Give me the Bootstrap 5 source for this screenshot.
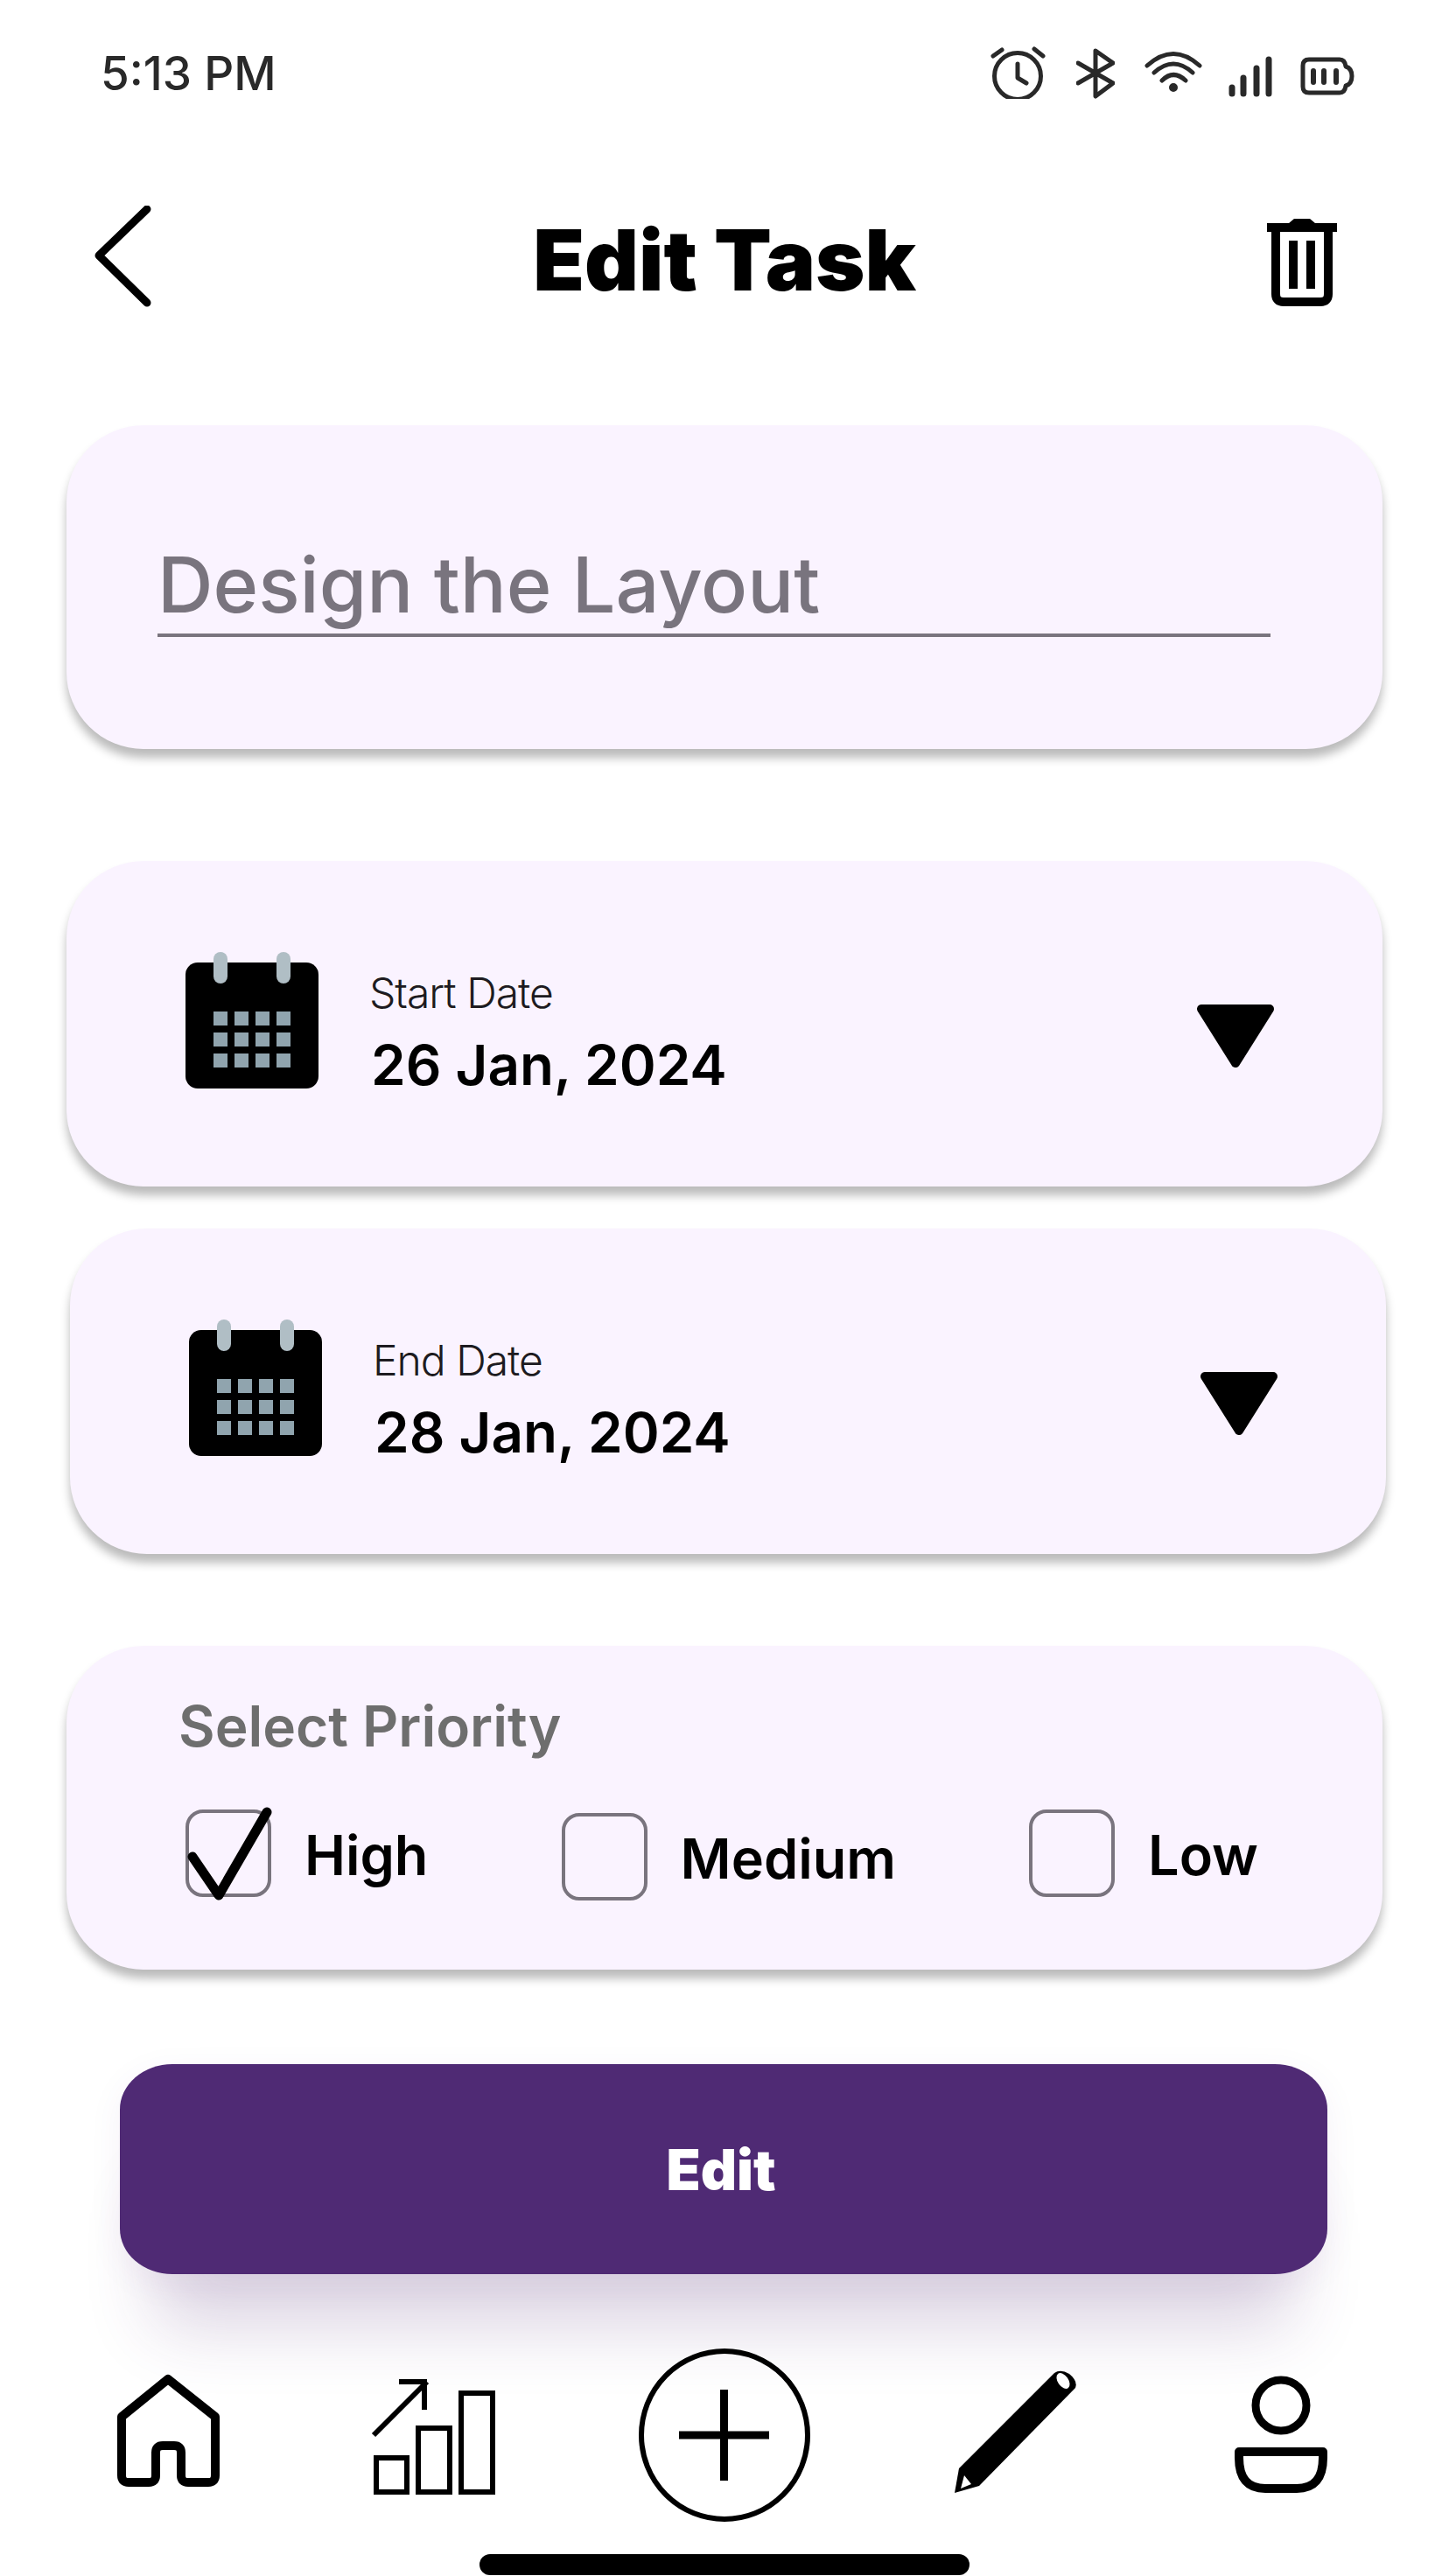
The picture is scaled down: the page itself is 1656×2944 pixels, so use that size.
<!DOCTYPE html>
<html>
<head>
    <title>Edit Task</title>
    <link href="https://cdn.jsdelivr.net/npm/bootstrap@5.3.0/dist/css/bootstrap.min.css" rel="stylesheet">
    <style>
        body { background: #fff; font-family: "Inter", "Liberation Sans", sans-serif; color: #000; }
        .phone { width: 1656px; height: 2944px; overflow: hidden; }

        /* status bar */
        .status-row { height: 130px; padding-left: 115px; }
        .clock { width: 1017px; font-size: 53px; font-weight: 500; line-height: 65px; color: #292929; margin-top: 52px; }
        .status-row svg { fill: none; stroke: #292929; stroke-width: 5; stroke-linecap: round; stroke-linejoin: round; }
        .st-alarm { margin-top: 53px; }
        .st-blue { margin: 55px 0 0 34px; }
        .st-wifi { margin: 58px 0 0 34px; }
        .st-signal { margin: 62px 0 0 28px; }
        .st-batt { margin: 63px 0 0 29px; }

        /* header */
        .top-row { display: grid; grid-template-columns: 1fr auto 1fr; height: 130px; margin-top: 105px; padding: 0 106px; align-items: center; }
        .top-title { font-size: 96px; font-weight: 900; line-height: 1; margin: 0; padding-bottom: 6px; }
        .top-trash { justify-self: end; margin-right: 14px; }

        /* cards */
        .task-card { background: #faf3ff; border-radius: 88px; box-shadow: 0 10px 11px rgba(0, 0, 0, .27); width: 1504px; }
        .name-card { height: 370px; margin: 121px 0 0 76px; padding: 127px 128px 0 104px; }
        .name-text { font-size: 88px; font-weight: 500; line-height: 111px; color: #79747e; border-bottom: 4px solid #79747e; }
        .date-card { height: 372px; padding: 104px 124px 0 136px; }
        .date-one { margin: 128px 0 0 76px; }
        .date-two { margin: 48px 0 0 80px; }
        .date-info { margin-left: 60px; margin-top: 18px; flex-grow: 1; }
        .date-label { font-size: 48px; font-weight: 300; line-height: 58px; color: #1d1b20; letter-spacing: -1px; margin-left: -2px; }
        .date-value { font-size: 63.700px; font-weight: 600; line-height: 78px; margin-top: 14px; }
        .date-arrow { margin-top: 60px; }
        .cal-ring { fill: #b0bec5; }
        .cal-dot { fill: #90a4ae; }

        .prio-card { height: 370px; margin: 105px 0 0 76px; padding: 54px 142px 0 136px; }
        .prio-title { font-size: 64px; font-weight: 600; line-height: 76px; color: #6e6e6e; margin-left: -8px; }
        .prio-row { margin-top: 57px; }
        .prio-item { gap: 38px; }
        .prio-mid { margin-top: 4px; }
        .tick-box { width: 98px; height: 100px; border: 4px solid #79747e; border-radius: 20px; flex-shrink: 0; }
        .tick-mark { left: -4px; top: -8px; overflow: visible; }
        .prio-label { font-size: 63px; font-weight: 600; line-height: 104px; }

        /* button */
        .save-btn { display: block; width: 1380px; height: 240px; margin: 108px 0 0 137px; padding: 2px 6px 0 0; background: #4f2a74; border: 0; border-radius: 60px / 52px; color: #fff; font-size: 64px; font-weight: 900; box-shadow: 0 100px 80px -40px rgba(79, 42, 116, .2), 0 10px 40px rgba(79, 42, 116, .06); }
        .save-btn:hover { background: #4f2a74; color: #fff; }

        /* bottom bar */
        .tab-row { height: 210px; margin-top: 80px; }
        .tab-row svg { display: block; flex-shrink: 0; }
        .tab-home { margin-left: 128px; }
        .tab-chart { margin-left: 168px; }
        .tab-plus { margin-left: 161px; }
        .tab-pen { margin-left: 163px; }
        .tab-user { margin-left: 177px; }
        .home-pill { width: 560px; height: 24px; margin: 30px 0 0 548px; background: #000; border-radius: 12px; }
    </style>
</head>
<body>
<div class="phone">
    <!-- status bar -->
    <div class="status-row d-flex align-items-start">
        <div class="clock">5:13 PM</div>
        <svg class="st-alarm" width="64" height="60" viewBox="0 0 64 60"><circle cx="31" cy="34" r="26.5"/><path d="M31 20V36L41 42M3 11 13 4M50 3 60 11"/></svg>
        <svg class="st-blue" width="44" height="58" viewBox="0 0 44 58"><path d="M2 17 42 40 22 55V3L42 17 2 40"/></svg>
        <svg class="st-wifi" width="66" height="48" viewBox="0 0 66 48"><path d="M3 17Q33-10 63 17M11 25Q33 5 55 25M20 34Q33 21 47 34"/><circle cx="33" cy="42" r="2.5"/></svg>
        <svg class="st-signal" width="54" height="52" viewBox="0 0 54 52"><path stroke-width="7" d="M6 38V45M19 27V45M34 16V45M48 6V45"/></svg>
        <svg class="st-batt" width="64" height="48" viewBox="0 0 64 48"><path d="M11 5H46Q52 5 53 13 60 15 60 24 60 33 53 35 52 43 46 43H11Q4 43 4 36V12Q4 5 11 5Z"/><path stroke-width="6" d="M16 18V31M28 18V31M42 18V31"/></svg>
    </div>

    <!-- header -->
    <div class="top-row">
        <svg width="70" height="130" viewBox="106 235 70 130"><path d="M168 239 113 292 168 346" fill="none" stroke="#000" stroke-width="9" stroke-linecap="round" stroke-linejoin="round"/></svg>
        <h1 class="top-title">Edit Task</h1>
        <svg class="top-trash" width="96" height="120" viewBox="1440 240 96 120">
            <path d="M1448 255H1528V265H1448ZM1473 255 1479 250H1497L1503 255Z"/>
            <path d="M1458 265V336Q1458 345 1467 345H1509Q1518 345 1518 336V265" fill="none" stroke="#000" stroke-width="10"/>
            <path d="M1473 275H1483V330H1473ZM1493 275H1503V330H1493Z"/>
        </svg>
    </div>

    <!-- task name -->
    <div class="card border-0 task-card name-card">
        <div class="name-text">Design the Layout</div>
    </div>

    <!-- dates -->
    <div class="card border-0 task-card date-card date-one">
        <div class="d-flex align-items-start">
            <svg width="152" height="156" viewBox="0 0 152 156">
                <rect y="12" width="152" height="144" rx="14"/>
                <rect class="cal-ring" x="32" width="16" height="36" rx="8"/><rect class="cal-ring" x="104" width="16" height="36" rx="8"/>
                <g class="cal-dot">
                    <rect x="32" y="68" width="16" height="16"/><rect x="56" y="68" width="16" height="16"/><rect x="80" y="68" width="16" height="16"/><rect x="104" y="68" width="16" height="16"/>
                    <rect x="32" y="92" width="16" height="16"/><rect x="56" y="92" width="16" height="16"/><rect x="80" y="92" width="16" height="16"/><rect x="104" y="92" width="16" height="16"/>
                    <rect x="32" y="116" width="16" height="16"/><rect x="56" y="116" width="16" height="16"/><rect x="80" y="116" width="16" height="16"/><rect x="104" y="116" width="16" height="16"/>
                </g>
            </svg>
            <div class="date-info">
                <div class="date-label">Start Date</div>
                <div class="date-value">26 Jan, 2024</div>
            </div>
            <svg class="date-arrow" width="88" height="72" viewBox="0 0 88 72"><path d="M5 5H83L44 67Z" stroke="#000" stroke-width="10" stroke-linejoin="round"/></svg>
        </div>
    </div>
    <div class="card border-0 task-card date-card date-two">
        <div class="d-flex align-items-start">
            <svg width="152" height="156" viewBox="0 0 152 156">
                <rect y="12" width="152" height="144" rx="14"/>
                <rect class="cal-ring" x="32" width="16" height="36" rx="8"/><rect class="cal-ring" x="104" width="16" height="36" rx="8"/>
                <g class="cal-dot">
                    <rect x="32" y="68" width="16" height="16"/><rect x="56" y="68" width="16" height="16"/><rect x="80" y="68" width="16" height="16"/><rect x="104" y="68" width="16" height="16"/>
                    <rect x="32" y="92" width="16" height="16"/><rect x="56" y="92" width="16" height="16"/><rect x="80" y="92" width="16" height="16"/><rect x="104" y="92" width="16" height="16"/>
                    <rect x="32" y="116" width="16" height="16"/><rect x="56" y="116" width="16" height="16"/><rect x="80" y="116" width="16" height="16"/><rect x="104" y="116" width="16" height="16"/>
                </g>
            </svg>
            <div class="date-info">
                <div class="date-label">End Date</div>
                <div class="date-value">28 Jan, 2024</div>
            </div>
            <svg class="date-arrow" width="88" height="72" viewBox="0 0 88 72"><path d="M5 5H83L44 67Z" stroke="#000" stroke-width="10" stroke-linejoin="round"/></svg>
        </div>
    </div>

    <!-- priority -->
    <div class="card border-0 task-card prio-card">
        <div class="prio-title">Select Priority</div>
        <div class="prio-row d-flex justify-content-between align-items-start">
            <div class="prio-item d-flex">
                <div class="tick-box position-relative">
                    <svg class="tick-mark position-absolute" width="98" height="108" viewBox="212 2060 98 108"><path d="M220 2118 250 2162 305 2067" fill="none" stroke="#000" stroke-width="11" stroke-linecap="round" stroke-linejoin="round"/></svg>
                </div>
                <div class="prio-label">High</div>
            </div>
            <div class="prio-item prio-mid d-flex">
                <div class="tick-box"></div>
                <div class="prio-label">Medium</div>
            </div>
            <div class="prio-item d-flex">
                <div class="tick-box"></div>
                <div class="prio-label">Low</div>
            </div>
        </div>
    </div>

    <button type="button" class="btn save-btn">Edit</button>

    <!-- bottom bar -->
    <div class="tab-row d-flex">
        <svg class="tab-home" width="128" height="210" viewBox="128 2680 128 210"><path d="M192 2720 246 2763V2830Q246 2838 238 2838H215Q207 2838 207 2830V2804Q207 2796 199 2796H186Q178 2796 178 2804V2830Q178 2838 170 2838H147Q139 2838 139 2830V2763Z" fill="none" stroke="#000" stroke-width="10" stroke-linejoin="round"/></svg>
        <svg class="tab-chart" width="144" height="210" viewBox="424 2680 144 210"><path d="M430 2810H465V2849H430ZM478 2776H514V2849H478ZM527 2736H563V2849H527ZM427 2784 488 2723M456 2723H485V2755" fill="none" stroke="#000" stroke-width="6"/></svg>
        <svg class="tab-plus" width="198" height="210" viewBox="729 2680 198 210"><ellipse cx="828" cy="2784" rx="95" ry="96" fill="none" stroke="#000" stroke-width="6"/><path d="M776 2784H879M827.500 2732V2836" stroke="#000" stroke-width="9"/></svg>
        <svg class="tab-pen" width="142" height="210" viewBox="1090 2680 142 210"><path d="M1091 2850 1096 2822 1205 2713Q1212 2708 1222 2714 1232 2722 1229 2730L1119 2842Z"/><ellipse cx="1215" cy="2722" rx="6" ry="10" transform="rotate(-35 1215 2722)" fill="#fff"/><path d="M1098 2845 1102 2830 1110 2840Z" fill="#fff"/></svg>
        <svg class="tab-user" width="110" height="210" viewBox="1409 2680 110 210"><circle cx="1464" cy="2750" r="29" fill="none" stroke="#000" stroke-width="9"/><path d="M1416 2803H1512V2810Q1512 2845 1482 2845H1446Q1416 2845 1416 2810Z" fill="none" stroke="#000" stroke-width="10" stroke-linejoin="round"/></svg>
    </div>
    <div class="home-pill"></div>
</div>
<script src="https://cdn.jsdelivr.net/npm/bootstrap@5.3.0/dist/js/bootstrap.bundle.min.js"></script>
</body>
</html>
